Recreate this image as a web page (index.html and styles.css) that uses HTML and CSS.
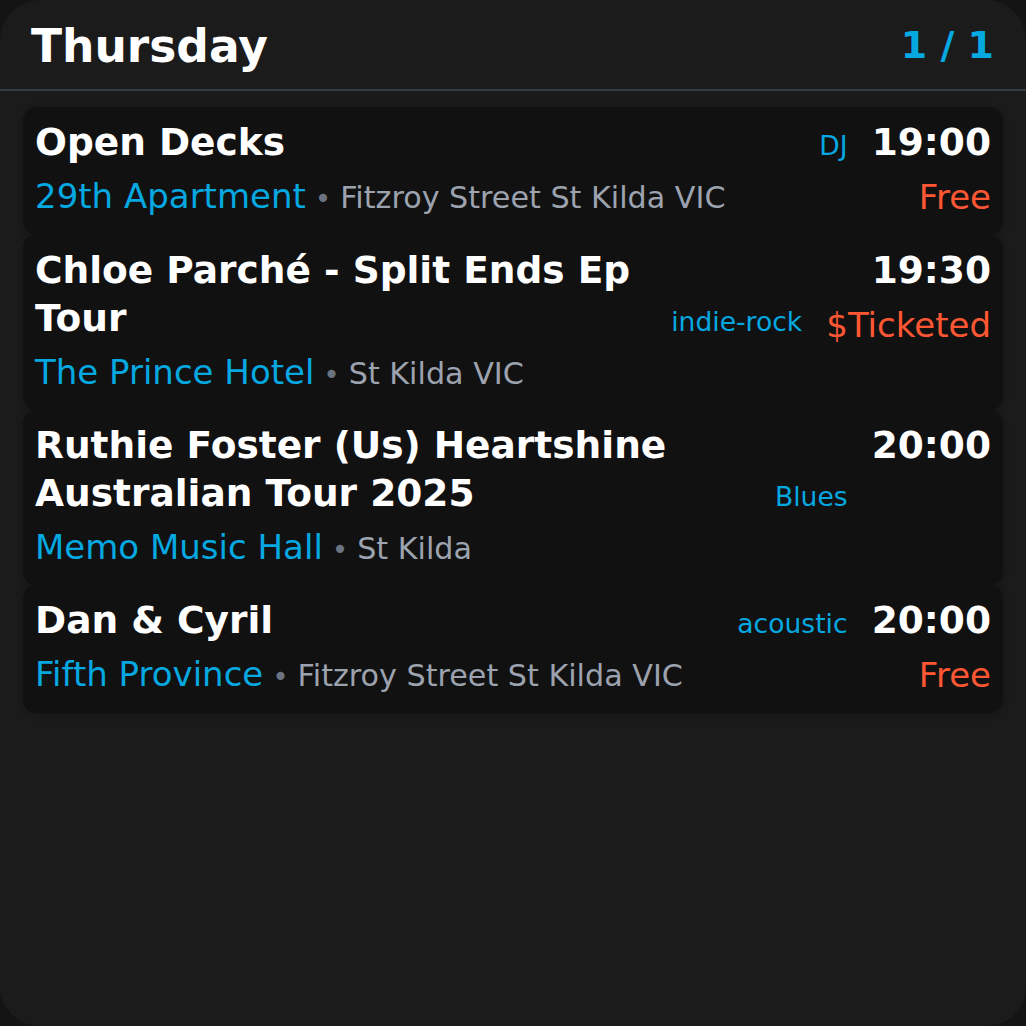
FILE: index.html
```html
<!DOCTYPE html>
<html lang="en">
<head>
<meta charset="utf-8">
<title>Thursday</title>
<link rel="stylesheet" href="styles.css">
</head>
<body>
<div class="screen">
  <header class="header">
    <h1 class="day">Thursday</h1>
    <div class="count">1 / 1</div>
  </header>
  <main class="list">
    <article class="card">
      <div class="main">
        <div class="head">
          <h2 class="title">Open Decks</h2>
          <span class="tag">DJ</span>
        </div>
        <div class="venue-line"><span class="venue">29th Apartment</span><span class="sep"> • </span><span class="addr">Fitzroy Street St Kilda VIC</span></div>
      </div>
      <div class="side">
        <div class="time">19:00</div>
        <div class="price">Free</div>
      </div>
    </article>
    <article class="card">
      <div class="main">
        <div class="head">
          <h2 class="title">Chloe Parché - Split Ends Ep Tour</h2>
          <span class="tag">indie-rock</span>
        </div>
        <div class="venue-line"><span class="venue">The Prince Hotel</span><span class="sep"> • </span><span class="addr">St Kilda VIC</span></div>
      </div>
      <div class="side">
        <div class="time">19:30</div>
        <div class="price">$Ticketed</div>
      </div>
    </article>
    <article class="card">
      <div class="main">
        <div class="head">
          <h2 class="title">Ruthie Foster (Us) Heartshine Australian Tour 2025</h2>
          <span class="tag">Blues</span>
        </div>
        <div class="venue-line"><span class="venue">Memo Music Hall</span><span class="sep"> • </span><span class="addr">St Kilda</span></div>
      </div>
      <div class="side">
        <div class="time">20:00</div>
      </div>
    </article>
    <article class="card">
      <div class="main">
        <div class="head">
          <h2 class="title">Dan &amp; Cyril</h2>
          <span class="tag">acoustic</span>
        </div>
        <div class="venue-line"><span class="venue">Fifth Province</span><span class="sep"> • </span><span class="addr">Fitzroy Street St Kilda VIC</span></div>
      </div>
      <div class="side">
        <div class="time">20:00</div>
        <div class="price">Free</div>
      </div>
    </article>
  </main>
</div>
</body>
</html>
```

FILE: styles.css
```css
html, body {
  margin: 0;
  padding: 0;
  background: #141414;
}

body {
  font-family: "DejaVu Sans", "Liberation Sans", sans-serif;
  color: #ffffff;
}

.screen {
  height: 1026px;
  box-sizing: border-box;
  background: #1b1b1b;
  border-radius: 40px;
  overflow: hidden;
}

.header {
  display: flex;
  align-items: center;
  justify-content: space-between;
  height: 91px;
  box-sizing: border-box;
  padding: 4px 32px 0 31px;
  border-bottom: 2px solid #363c47;
}

.day {
  margin: 0;
  font-size: 45.5px;
  font-weight: 700;
  line-height: 54px;
  color: #ffffff;
}

.count {
  font-size: 38px;
  font-weight: 700;
  line-height: 44px;
  color: #05a8e0;
  margin-top: -4px;
}

.list {
  display: flex;
  flex-direction: column;
  padding: 16px 23px 0;
}

.card {
  display: flex;
  gap: 24px;
  background: #111111;
  border-radius: 14px;
  padding: 11px 12px 18px;
  box-shadow: 0 2px 8px rgba(0, 0, 0, 0.22);
}

.main {
  flex: 1;
  min-width: 0;
}

.head {
  display: flex;
  align-items: last baseline;
  gap: 20px;
}

.title {
  flex: 1;
  margin: 0;
  font-size: 37.5px;
  line-height: 48px;
  font-weight: 700;
  color: #ffffff;
}

.tag {
  font-size: 26.6px;
  line-height: 32px;
  color: #05a8e0;
  white-space: nowrap;
}

.venue-line {
  margin-top: 10px;
  font-size: 34px;
  line-height: 40px;
  white-space: nowrap;
}

.venue {
  font-size: 34px;
  line-height: 1;
  color: #05a8e0;
}

.sep {
  font-size: 28px;
  line-height: 1;
  color: #6b7280;
}

.addr {
  font-size: 30.2px;
  line-height: 1;
  color: #9ca3af;
}

.side {
  display: flex;
  flex-direction: column;
  align-items: flex-end;
}

.time {
  font-size: 37.5px;
  line-height: 48px;
  font-weight: 700;
  color: #ffffff;
}

.price {
  margin-top: 11px;
  font-size: 34px;
  line-height: 40px;
  color: #ff5733;
}
```
